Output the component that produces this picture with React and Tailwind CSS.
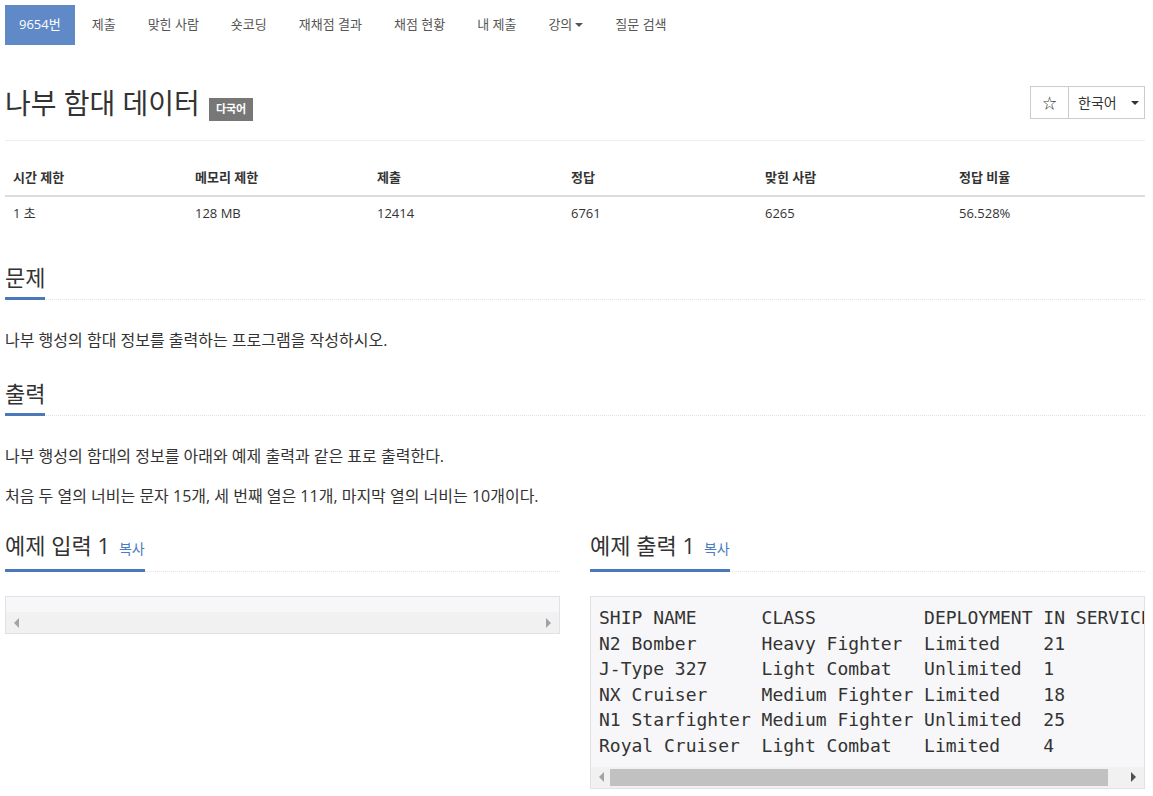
import React from 'react';

const font = "font-['Open_Sans','Noto_Sans_CJK_KR',sans-serif]";

const navItems = ['제출', '맞힌 사람', '숏코딩', '재채점 결과', '채점 현황', '내 제출', '강의', '질문 검색'];

const stats = [
  { label: '시간 제한', value: '1 초', w: 'w-[182px]' },
  { label: '메모리 제한', value: '128 MB', w: 'w-[182px]' },
  { label: '제출', value: '12414', w: 'w-[194px]' },
  { label: '정답', value: '6761', w: 'w-[194px]' },
  { label: '맞힌 사람', value: '6265', w: 'w-[194px]' },
  { label: '정답 비율', value: '56.528%', w: 'w-[194px]' },
];

const output = `SHIP NAME      CLASS          DEPLOYMENT IN SERVICE
N2 Bomber      Heavy Fighter  Limited    21
J-Type 327     Light Combat   Unlimited  1
NX Cruiser     Medium Fighter Limited    18
N1 Starfighter Medium Fighter Unlimited  25
Royal Cruiser  Light Combat   Limited    4`;

const Headline = ({ children, copy }) => (
  <div className="flex items-end border-b border-dotted border-[#e4e4e4]">
    <h2 className="text-[22px] leading-[30px] pb-[5px] text-[#333] border-b-[3px] border-[#4a78ba] -mb-px flex items-baseline gap-[9px]">
      <span>{children}</span>
      {copy && <span className="text-[14px] text-[#4a7cc0]">복사</span>}
    </h2>
  </div>
);

const Scrollbar = ({ thumb, dark }) => (
  <div className="h-[21px] bg-[#f1f1f1] flex items-center px-[8px] gap-[6px]">
    <span className="w-0 h-0 border-y-[5px] border-y-transparent border-r-[5px] border-r-[#a3a3a3]" />
    <div className="flex-1 h-[17px]">
      {thumb && <div className="h-full w-[498px] bg-[#c1c1c1]" />}
    </div>
    <span className={`w-0 h-0 border-y-[5px] border-y-transparent border-l-[5px] ${dark ? 'border-l-[#505050]' : 'border-l-[#a3a3a3]'}`} />
  </div>
);

export default function App() {
  return (
    <div className={`${font} bg-white min-h-screen text-[#333] overflow-hidden`}>
      <div className="w-[1140px] ml-[5px]">
        {/* Problem menu */}
        <ul className="flex gap-[2px] pt-[5px] text-[13px] text-[#555]">
          <li className="h-[40px] px-[14px] flex items-center bg-[#5f89c7] text-white">9654번</li>
          {navItems.map(n => (
            <li key={n} className="h-[40px] px-[15px] flex items-center">
              {n}
              {n === '강의' && <span className="ml-[3px] w-0 h-0 border-x-[4px] border-x-transparent border-t-[4px] border-t-[#555]" />}
            </li>
          ))}
        </ul>

        {/* Title */}
        <div className="mt-[41px] flex items-start justify-between pb-[20px] border-b border-[#eee]">
          <div className="flex items-end gap-[9px]">
            <h1 className="text-[28px] leading-[34px] text-[#333]">나부 함대 데이터</h1>
            <span className="h-[23px] -mb-px px-[7px] flex items-center bg-[#777] text-white text-[11px] font-bold">다국어</span>
          </div>
          <div className="flex h-[33px] border border-[#ccc]">
            <div className="w-[38px] flex items-center justify-center text-[14px] text-[#333] border-r border-[#ccc]">☆</div>
            <div className="w-[75px] flex items-center pl-[9px] text-[14px] text-[#333]">
              한국어
              <span className="ml-[14px] w-0 h-0 border-x-[4px] border-x-transparent border-t-[4px] border-t-[#333]" />
            </div>
          </div>
        </div>

        {/* Stats table */}
        <div className="mt-[19px] text-[13px]">
          <div className="flex h-[37px] items-center border-b-2 border-[#ddd] font-bold">
            {stats.map(s => (
              <div key={s.label} className={`${s.w} px-[8px]`}>{s.label}</div>
            ))}
          </div>
          <div className="flex h-[34px] items-center">
            {stats.map(s => (
              <div key={s.label} className={`${s.w} px-[8px]`}>{s.value}</div>
            ))}
          </div>
        </div>

        {/* Description */}
        <div className="mt-[31px]">
          <Headline>문제</Headline>
          <p className="mt-[28px] text-[16px] leading-[24px]">나부 행성의 함대 정보를 출력하는 프로그램을 작성하시오.</p>
        </div>

        <div className="mt-[26px]">
          <Headline>출력</Headline>
          <p className="mt-[28px] text-[16px] leading-[24px]">나부 행성의 함대의 정보를 아래와 예제 출력과 같은 표로 출력한다.</p>
          <p className="mt-[16px] text-[16px] leading-[24px]">처음 두 열의 너비는 문자 15개, 세 번째 열은 11개, 마지막 열의 너비는 10개이다.</p>
        </div>

        {/* Samples */}
        <div className="mt-[22px] grid grid-cols-2 gap-[30px]">
          <div>
            <Headline copy>예제 입력 1</Headline>
            <div className="mt-[24px] border border-[#e1e1e8] bg-[#f7f7f9]">
              <div className="h-[15px]" />
              <Scrollbar />
            </div>
          </div>
          <div>
            <Headline copy>예제 출력 1</Headline>
            <div className="mt-[24px] border border-[#e1e1e8] bg-[#f7f7f9] overflow-hidden">
              <pre className="pt-[8px] pb-[8px] pl-[8px] font-['DejaVu_Sans_Mono',monospace] text-[18px] leading-[25.6px] text-[#333] whitespace-pre">{output}</pre>
              <Scrollbar thumb dark />
            </div>
          </div>
        </div>
      </div>
    </div>
  );
}
